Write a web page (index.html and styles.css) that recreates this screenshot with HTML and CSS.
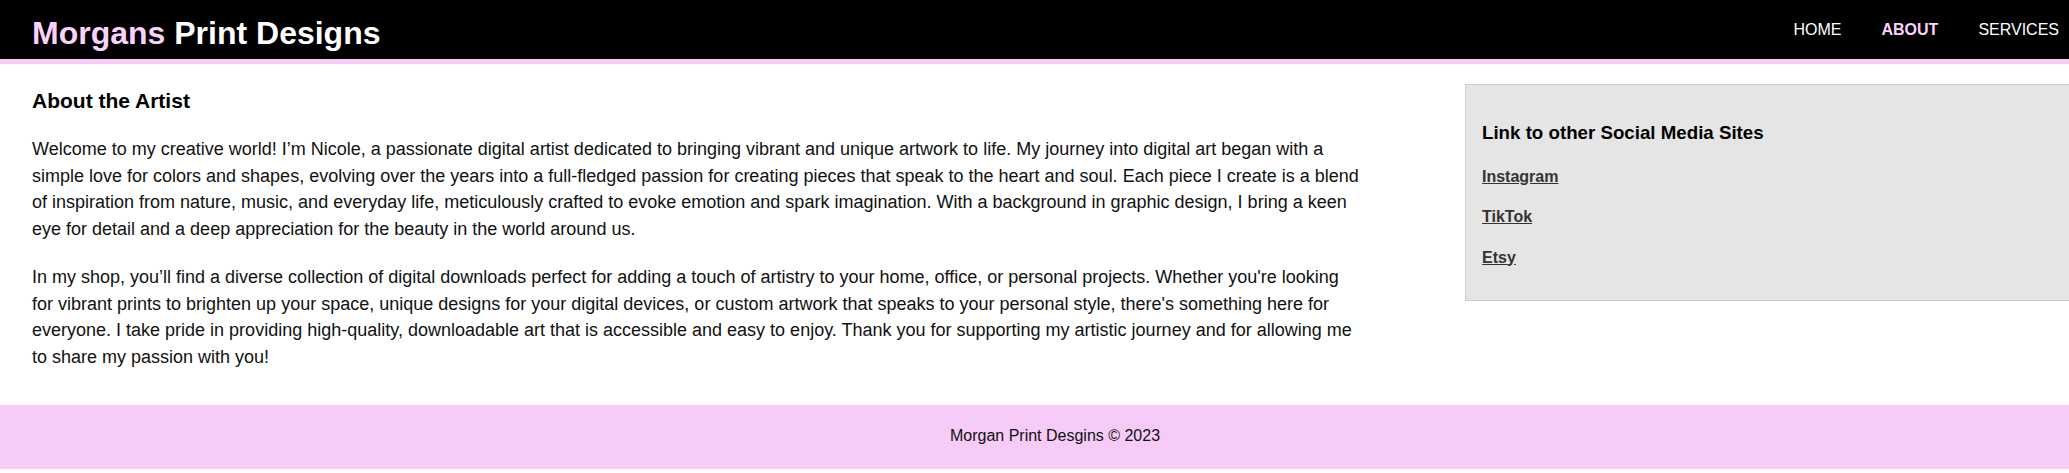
FILE: index.html
```html
<!DOCTYPE html>
<html lang="en">
<head>
<meta charset="utf-8">
<title>Morgans Print Designs - About</title>
<link rel="stylesheet" href="styles.css">
</head>
<body>
<div class="page">
  <header class="site-header">
    <h1 class="brand"><span class="brand-accent">Morgans</span> Print Designs</h1>
    <nav class="nav">
      <a href="#" class="nav-link">HOME</a>
      <a href="#" class="nav-link active">ABOUT</a>
      <a href="#" class="nav-link">SERVICES</a>
    </nav>
  </header>
  <div class="layout">
    <main class="content">
      <h2 class="content-title">About the Artist</h2>
      <p class="content-text">Welcome to my creative world! I’m Nicole, a passionate digital artist dedicated to bringing vibrant and unique artwork to life. My journey into digital art began with a simple love for colors and shapes, evolving over the years into a full-fledged passion for creating pieces that speak to the heart and soul. Each piece I create is a blend of inspiration from nature, music, and everyday life, meticulously crafted to evoke emotion and spark imagination. With a background in graphic design, I bring a keen eye for detail and a deep appreciation for the beauty in the world around us.</p>
      <p class="content-text">In my shop, you’ll find a diverse collection of digital downloads perfect for adding a touch of artistry to your home, office, or personal projects. Whether you're looking for vibrant prints to brighten up your space, unique designs for your digital devices, or custom artwork that speaks to your personal style, there's something here for everyone. I take pride in providing high-quality, downloadable art that is accessible and easy to enjoy. Thank you for supporting my artistic journey and for allowing me to share my passion with you!</p>
    </main>
    <aside class="sidebar">
      <h3 class="sidebar-title">Link to other Social Media Sites</h3>
      <a href="#" class="social-link">Instagram</a>
      <a href="#" class="social-link">TikTok</a>
      <a href="#" class="social-link">Etsy</a>
    </aside>
  </div>
  <footer class="site-footer">Morgan Print Desgins © 2023</footer>
</div>
</body>
</html>
```

FILE: styles.css
```css
html, body {
  margin: 0;
  padding: 0;
  overflow-x: hidden;
  background: #fff;
}

body {
  font-family: "Liberation Sans", Arial, sans-serif;
  color: #111;
}

.page {
  width: 2110px;
}

.site-header {
  height: 59px;
  background: #000;
  border-bottom: 5px solid #f6cbf8;
  display: flex;
  align-items: center;
  justify-content: space-between;
  padding: 0 31px 0 32px;
}

.brand {
  margin: 7px 0 0;
  font-size: 32px;
  line-height: 37px;
  font-weight: bold;
  color: #fff;
}

.brand-accent {
  color: #fbd2fb;
}

.nav {
  display: flex;
}

.nav-link {
  padding: 0 20px;
  font-size: 16px;
  line-height: 18px;
  color: #fff;
  text-decoration: none;
}

.nav-link.active {
  font-weight: bold;
  color: #fbd2fb;
}

.layout {
  display: flex;
  align-items: flex-start;
}

.content {
  width: 1332px;
  padding: 25px 0 13px 32px;
  flex: none;
}

.content-title {
  margin: 0 0 23px;
  font-size: 21px;
  line-height: 24px;
  font-weight: bold;
  color: #000;
}

.content-text {
  margin: 0 0 21px;
  font-size: 18px;
  line-height: 26.7px;
}

.sidebar {
  flex: 1;
  margin: 20px 32px 0 101px;
  padding: 37px 16px 30px;
  background: #e5e5e5;
  border: 1px solid #ccc;
  display: flex;
  flex-direction: column;
  align-items: flex-start;
  gap: 16.5px;
}

.sidebar-title {
  margin: 0 0 4.5px;
  font-size: 18.72px;
  line-height: 21.5px;
  font-weight: bold;
  color: #000;
}

.social-link {
  font-size: 16px;
  line-height: 24px;
  font-weight: bold;
  color: #333;
  text-decoration: underline;
}

.site-footer {
  background: #f6cbf8;
  padding: 22px 0 24px;
  font-size: 16px;
  line-height: 18px;
  text-align: center;
  color: #111;
}
```
